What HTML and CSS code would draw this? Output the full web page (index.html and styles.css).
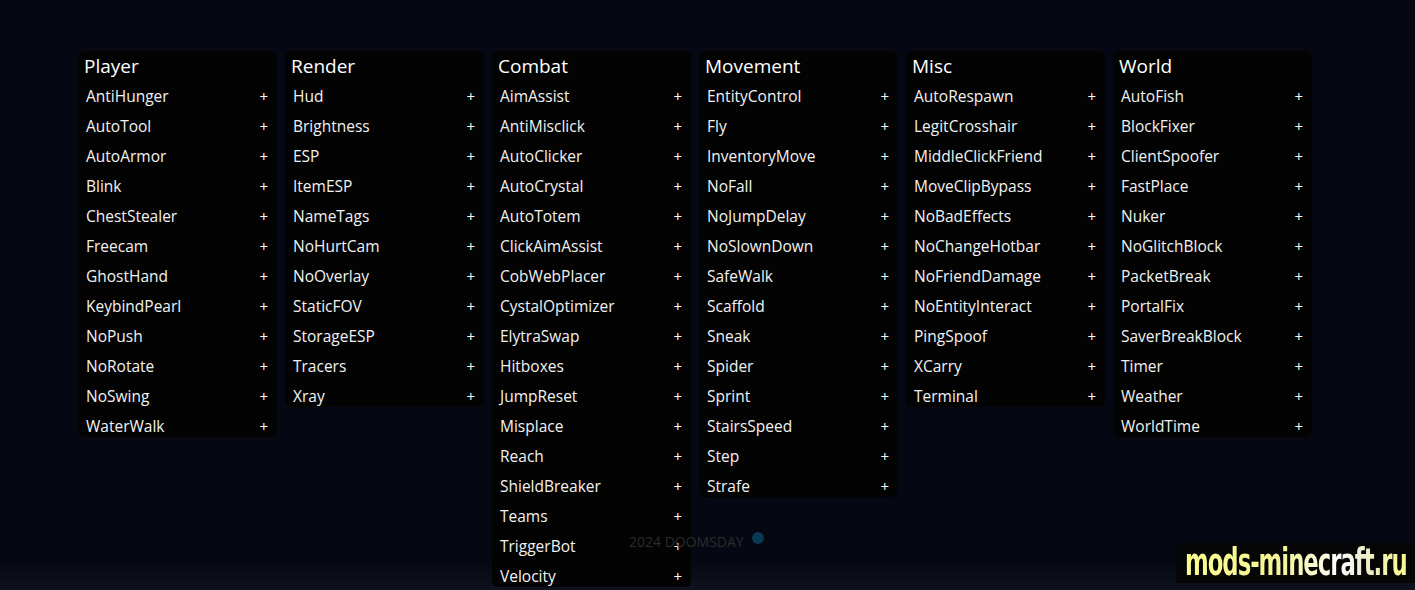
FILE: index.html
```html
<!DOCTYPE html>
<html lang="en">
<head>
    <meta charset="UTF-8">
    <meta name="viewport" content="width=device-width, initial-scale=1.0">
    <title>DOOMSDAY</title>
    <link rel="stylesheet" href="styles.css">
</head>
<body>
    <div id="panels">
        <div class="panel">
            <div class="panel-title">Player</div>
            <div class="module"><span>AntiHunger</span><span class="plus">+</span></div>
            <div class="module"><span>AutoTool</span><span class="plus">+</span></div>
            <div class="module"><span>AutoArmor</span><span class="plus">+</span></div>
            <div class="module"><span>Blink</span><span class="plus">+</span></div>
            <div class="module"><span>ChestStealer</span><span class="plus">+</span></div>
            <div class="module"><span>Freecam</span><span class="plus">+</span></div>
            <div class="module"><span>GhostHand</span><span class="plus">+</span></div>
            <div class="module"><span>KeybindPearl</span><span class="plus">+</span></div>
            <div class="module"><span>NoPush</span><span class="plus">+</span></div>
            <div class="module"><span>NoRotate</span><span class="plus">+</span></div>
            <div class="module"><span>NoSwing</span><span class="plus">+</span></div>
            <div class="module"><span>WaterWalk</span><span class="plus">+</span></div>
        </div>
        <div class="panel">
            <div class="panel-title">Render</div>
            <div class="module"><span>Hud</span><span class="plus">+</span></div>
            <div class="module"><span>Brightness</span><span class="plus">+</span></div>
            <div class="module"><span>ESP</span><span class="plus">+</span></div>
            <div class="module"><span>ItemESP</span><span class="plus">+</span></div>
            <div class="module"><span>NameTags</span><span class="plus">+</span></div>
            <div class="module"><span>NoHurtCam</span><span class="plus">+</span></div>
            <div class="module"><span>NoOverlay</span><span class="plus">+</span></div>
            <div class="module"><span>StaticFOV</span><span class="plus">+</span></div>
            <div class="module"><span>StorageESP</span><span class="plus">+</span></div>
            <div class="module"><span>Tracers</span><span class="plus">+</span></div>
            <div class="module"><span>Xray</span><span class="plus">+</span></div>
        </div>
        <div class="panel">
            <div class="panel-title">Combat</div>
            <div class="module"><span>AimAssist</span><span class="plus">+</span></div>
            <div class="module"><span>AntiMisclick</span><span class="plus">+</span></div>
            <div class="module"><span>AutoClicker</span><span class="plus">+</span></div>
            <div class="module"><span>AutoCrystal</span><span class="plus">+</span></div>
            <div class="module"><span>AutoTotem</span><span class="plus">+</span></div>
            <div class="module"><span>ClickAimAssist</span><span class="plus">+</span></div>
            <div class="module"><span>CobWebPlacer</span><span class="plus">+</span></div>
            <div class="module"><span>CystalOptimizer</span><span class="plus">+</span></div>
            <div class="module"><span>ElytraSwap</span><span class="plus">+</span></div>
            <div class="module"><span>Hitboxes</span><span class="plus">+</span></div>
            <div class="module"><span>JumpReset</span><span class="plus">+</span></div>
            <div class="module"><span>Misplace</span><span class="plus">+</span></div>
            <div class="module"><span>Reach</span><span class="plus">+</span></div>
            <div class="module"><span>ShieldBreaker</span><span class="plus">+</span></div>
            <div class="module"><span>Teams</span><span class="plus">+</span></div>
            <div class="module"><span>TriggerBot</span><span class="plus">+</span></div>
            <div class="module"><span>Velocity</span><span class="plus">+</span></div>
        </div>
        <div class="panel">
            <div class="panel-title">Movement</div>
            <div class="module"><span>EntityControl</span><span class="plus">+</span></div>
            <div class="module"><span>Fly</span><span class="plus">+</span></div>
            <div class="module"><span>InventoryMove</span><span class="plus">+</span></div>
            <div class="module"><span>NoFall</span><span class="plus">+</span></div>
            <div class="module"><span>NoJumpDelay</span><span class="plus">+</span></div>
            <div class="module"><span>NoSlownDown</span><span class="plus">+</span></div>
            <div class="module"><span>SafeWalk</span><span class="plus">+</span></div>
            <div class="module"><span>Scaffold</span><span class="plus">+</span></div>
            <div class="module"><span>Sneak</span><span class="plus">+</span></div>
            <div class="module"><span>Spider</span><span class="plus">+</span></div>
            <div class="module"><span>Sprint</span><span class="plus">+</span></div>
            <div class="module"><span>StairsSpeed</span><span class="plus">+</span></div>
            <div class="module"><span>Step</span><span class="plus">+</span></div>
            <div class="module"><span>Strafe</span><span class="plus">+</span></div>
        </div>
        <div class="panel">
            <div class="panel-title">Misc</div>
            <div class="module"><span>AutoRespawn</span><span class="plus">+</span></div>
            <div class="module"><span>LegitCrosshair</span><span class="plus">+</span></div>
            <div class="module"><span>MiddleClickFriend</span><span class="plus">+</span></div>
            <div class="module"><span>MoveClipBypass</span><span class="plus">+</span></div>
            <div class="module"><span>NoBadEffects</span><span class="plus">+</span></div>
            <div class="module"><span>NoChangeHotbar</span><span class="plus">+</span></div>
            <div class="module"><span>NoFriendDamage</span><span class="plus">+</span></div>
            <div class="module"><span>NoEntityInteract</span><span class="plus">+</span></div>
            <div class="module"><span>PingSpoof</span><span class="plus">+</span></div>
            <div class="module"><span>XCarry</span><span class="plus">+</span></div>
            <div class="module"><span>Terminal</span><span class="plus">+</span></div>
        </div>
        <div class="panel">
            <div class="panel-title">World</div>
            <div class="module"><span>AutoFish</span><span class="plus">+</span></div>
            <div class="module"><span>BlockFixer</span><span class="plus">+</span></div>
            <div class="module"><span>ClientSpoofer</span><span class="plus">+</span></div>
            <div class="module"><span>FastPlace</span><span class="plus">+</span></div>
            <div class="module"><span>Nuker</span><span class="plus">+</span></div>
            <div class="module"><span>NoGlitchBlock</span><span class="plus">+</span></div>
            <div class="module"><span>PacketBreak</span><span class="plus">+</span></div>
            <div class="module"><span>PortalFix</span><span class="plus">+</span></div>
            <div class="module"><span>SaverBreakBlock</span><span class="plus">+</span></div>
            <div class="module"><span>Timer</span><span class="plus">+</span></div>
            <div class="module"><span>Weather</span><span class="plus">+</span></div>
            <div class="module"><span>WorldTime</span><span class="plus">+</span></div>
        </div>
    </div>

    <div id="footer">2024 DOOMSDAY <span class="status-dot"></span></div>

    <div id="watermark"><span>mods-minecraft.ru</span></div>
</body>
</html>
```

FILE: styles.css
```css
body {
    margin: 0;
    height: 590px;
    overflow: hidden;
    font-family: 'Open Sans', 'Noto Sans', sans-serif;
    color: #f2f2f2;
    background: linear-gradient(to bottom, #050812 0%, #050812 95%, #0e121c 100%);
}

#panels {
    display: flex;
    align-items: flex-start;
    gap: 8px;
    padding: 51px 0 0 78px;
}

.panel {
    width: 199px;
    background: #030303;
    border-radius: 6px;
}

.panel-title {
    height: 30px;
    line-height: 30px;
    padding-left: 6px;
    font-size: 19px;
    color: #fff;
}

.module {
    display: flex;
    justify-content: space-between;
    align-items: center;
    height: 30px;
    padding: 0 9px 0 8px;
    font-size: 15.5px;
}

/* panel ends a few px before the last row does */
.module:last-child {
    margin-bottom: -4px;
}

.plus {
    font-size: 15px;
    color: #fff;
}

#footer {
    position: absolute;
    top: 532px;
    left: 629px;
    display: flex;
    align-items: center;
    gap: 8px;
    font-size: 14px;
    color: #2c2c2c;
}

.status-dot {
    width: 12px;
    height: 12px;
    border-radius: 50%;
    background: #0b3853;
    margin-top: -8px;
}

#watermark {
    position: absolute;
    top: 543px;
    right: 0;
    width: 239px;
    height: 40px;
    background: #060606;
    display: flex;
    justify-content: flex-end;
}

#watermark span {
    flex-shrink: 0;
    font-family: 'DejaVu Sans Condensed', 'DejaVu Sans', sans-serif;
    font-weight: bold;
    font-size: 37px;
    line-height: 40px;
    letter-spacing: -1.5px;
    white-space: nowrap;
    transform: scaleX(0.685);
    transform-origin: right center;
    margin-right: 8px;
    background: linear-gradient(to right, #fdfd8a 0%, #f4f49a 45%, #ffffff 70%, #ececd0 80%, #fafa8c 100%);
    -webkit-background-clip: text;
    background-clip: text;
    color: transparent;
}
```
